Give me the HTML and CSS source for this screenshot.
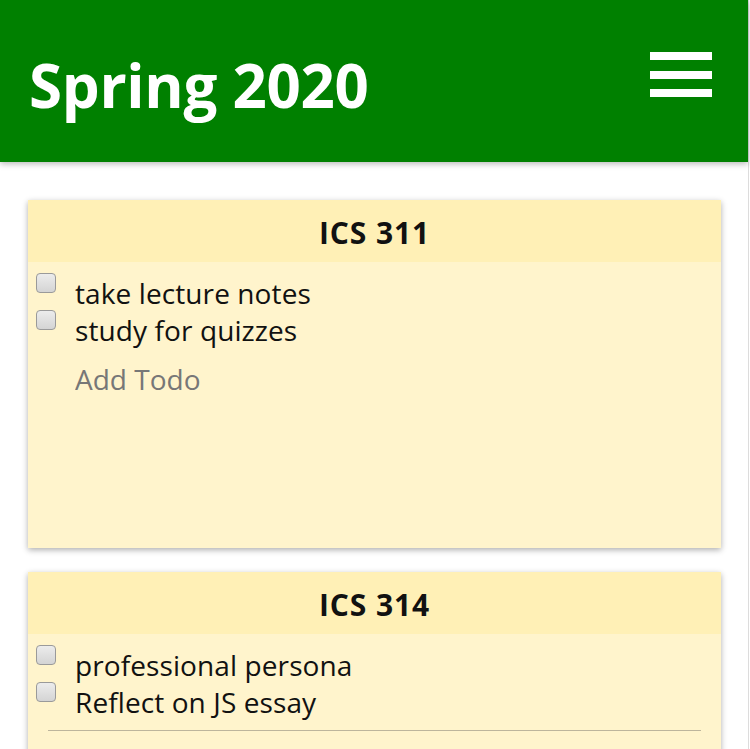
FILE: index.html
```html
<!DOCTYPE html>
<html lang="en">
<head>
<meta charset="utf-8">
<title>Spring 2020</title>
<link rel="stylesheet" href="styles.css">
</head>
<body>
<div class="page">
  <header class="topbar">
    <h1 class="title">Spring 2020</h1>
    <button class="menu" aria-label="Menu">
      <span class="bar"></span>
      <span class="bar"></span>
      <span class="bar"></span>
    </button>
  </header>
  <main class="board">
    <section class="card">
      <h2 class="card-title">ICS 311</h2>
      <div class="card-body">
        <ul class="todos">
          <li class="todo"><input type="checkbox" class="check"><span class="todo-text">take lecture notes</span></li>
          <li class="todo"><input type="checkbox" class="check"><span class="todo-text">study for quizzes</span></li>
        </ul>
        <input class="add" type="text" placeholder="Add Todo">
      </div>
    </section>
    <section class="card">
      <h2 class="card-title">ICS 314</h2>
      <div class="card-body">
        <ul class="todos">
          <li class="todo"><input type="checkbox" class="check"><span class="todo-text">professional persona</span></li>
          <li class="todo"><input type="checkbox" class="check"><span class="todo-text">Reflect on JS essay</span></li>
        </ul>
        <hr class="divider">
      </div>
    </section>
  </main>
</div>
</body>
</html>
```

FILE: styles.css
```css
html, body {
  margin: 0;
  padding: 0;
  background: #ffffff;
}
body {
  font-family: "Open Sans", "Noto Sans", "DejaVu Sans", sans-serif;
  color: #111111;
  overflow: hidden;
}
.page {
  width: 748px;
  min-height: 749px;
  border-right: 1px solid #dcdcdc;
  background: #ffffff;
}
.topbar {
  position: relative;
  z-index: 2;
  height: 162px;
  box-sizing: border-box;
  background: #008000;
  display: flex;
  justify-content: space-between;
  align-items: flex-start;
  padding: 52px 36px 0 29px;
  box-shadow: 0 2px 6px rgba(0, 0, 0, 0.28);
}
.title {
  margin: 3px 0 0 0;
  font-size: 60px;
  line-height: 60px;
  font-weight: 700;
  color: #ffffff;
  letter-spacing: -0.3px;
}
.menu {
  margin: 0;
  padding: 0;
  border: 0;
  background: transparent;
  width: 62px;
  display: flex;
  flex-direction: column;
  gap: 10.5px;
}
.bar {
  display: block;
  width: 62px;
  height: 8px;
  background: #ffffff;
}
.board {
  padding: 38px 27px 0 28px;
  display: flex;
  flex-direction: column;
  gap: 24px;
}
.card {
  min-height: 348px;
  background: #fff4cc;
  box-shadow: 0 2px 6px rgba(0, 0, 0, 0.32);
  display: flex;
  flex-direction: column;
}
.card-title {
  margin: 0;
  height: 62px;
  box-sizing: border-box;
  padding-top: 3px;
  line-height: 60px;
  font-size: 30px;
  font-weight: 700;
  letter-spacing: 0.9px;
  text-align: center;
  background: #fff0b6;
  color: #111111;
}
.card-body {
  padding: 11px 0 0 8px;
}
.todos {
  list-style: none;
  margin: 0;
  padding: 0;
}
.todo {
  display: flex;
  align-items: flex-start;
  height: 36.5px;
}
.check {
  appearance: none;
  -webkit-appearance: none;
  margin: 0;
  width: 20px;
  height: 20px;
  box-sizing: border-box;
  border: 1px solid #9a9a9a;
  border-radius: 4px;
  background: linear-gradient(#ececec, #d4d4d4);
}
.todo-text {
  margin-left: 19px;
  margin-top: 2px;
  font-size: 28px;
  line-height: 36px;
  letter-spacing: 0.1px;
  color: #111111;
}
.add {
  display: block;
  margin: 15px 0 0 39px;
  padding: 0;
  border: 0;
  outline: none;
  background: transparent;
  width: 600px;
  height: 36px;
  font-family: inherit;
  font-size: 28px;
  letter-spacing: 0px;
  color: #111111;
}
.add::placeholder {
  color: #777777;
}
.divider {
  margin: 12px 20px 0 12px;
  border: 0;
  height: 1px;
  background: #bdb59c;
}
```
